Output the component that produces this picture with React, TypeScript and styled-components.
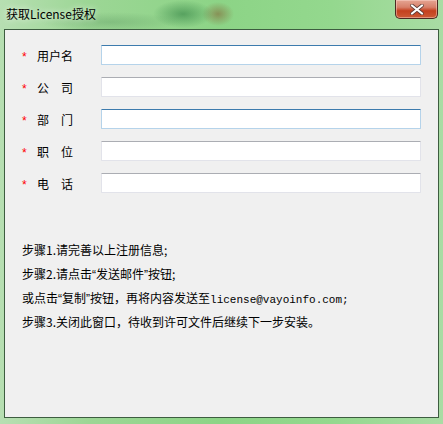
import React from 'react';
import styled, { createGlobalStyle } from 'styled-components';

const GlobalStyle = createGlobalStyle`
  html, body {
    margin: 0;
    padding: 0;
    background: #8fd48a;
  }
  body {
    font-family: "Noto Sans CJK SC", "Liberation Sans", sans-serif;
  }
`;

const Window = styled.div`
  width: 443px;
  height: 424px;
  display: flex;
  flex-direction: column;
  box-sizing: border-box;
  background:
    radial-gradient(ellipse 30px 14px at 183px 14px, rgba(40, 120, 60, 0.55), transparent),
    radial-gradient(ellipse 16px 12px at 218px 14px, rgba(130, 80, 40, 0.5), transparent),
    radial-gradient(ellipse 70px 10px at 110px 22px, rgba(60, 120, 70, 0.25), transparent),
    linear-gradient(90deg, #b7dfb2 0%, #9cd695 20%, #8cd486 50%, #94d88e 75%, #a9dca4 100%);
`;

const TitleBar = styled.div`
  height: 29px;
  flex: none;
  display: flex;
  align-items: flex-start;
  justify-content: space-between;
  padding: 0 5px 0 6px;
`;

const Title = styled.span`
  margin-top: 6px;
  font-size: 12px;
  line-height: 16px;
  color: #000;
  text-shadow: 0 0 6px rgba(255, 255, 255, 0.9);
`;

const CloseButton = styled.div`
  width: 43px;
  height: 19px;
  box-sizing: border-box;
  border: 1px solid #4b2a22;
  border-top: none;
  border-radius: 0 0 5px 5px;
  background: linear-gradient(180deg, #e5a593 0%, #d7806a 40%, #c4401e 60%, #cc5a35 100%);
  box-shadow: inset 0 0 0 1px rgba(255, 220, 210, 0.45);
  display: flex;
  align-items: center;
  justify-content: center;
`;

const Client = styled.div`
  flex: 1;
  margin: 0 4px 6px 4px;
  border: 1px solid #3d5d40;
  background: #f0f0f0;
  display: flex;
  flex-direction: column;
  padding: 15px 16px 0 16px;
`;

const Form = styled.div`
  display: flex;
  flex-direction: column;
  gap: 12px;
`;

const Row = styled.div`
  display: flex;
  align-items: center;
  height: 20px;
`;

const Star = styled.span`
  width: 15px;
  color: #ff0000;
  font-size: 12px;
  line-height: 12px;
  font-family: "Liberation Sans", sans-serif;
  padding-top: 3px;
  padding-left: 1px;
`;

const Label = styled.span`
  width: 36px;
  margin-right: 28px;
  display: flex;
  justify-content: space-between;
  font-size: 12px;
  color: #000;
`;

const Input = styled.div<{ $hot?: boolean }>`
  width: 320px;
  height: 20px;
  box-sizing: border-box;
  background: #fff;
  border: 1px solid ${(p) => (p.$hot ? '#b5d3ea' : '#e2e3ea')};
  border-top-color: ${(p) => (p.$hot ? '#3d7bad' : '#abadb3')};
  border-radius: 1px;
`;

const Steps = styled.div`
  margin-top: 45px;
  display: flex;
  flex-direction: column;
  padding-left: 1px;
`;

const Line = styled.div`
  height: 24px;
  line-height: 24px;
  font-size: 12px;
  color: #000;
  white-space: nowrap;
`;

const Quote = styled.span`
  font-family: "Liberation Sans", sans-serif;
`;

const Mail = styled.span`
  font-family: "Liberation Mono", monospace;
  font-size: 11px;
`;

const fields = [
  { chars: ['用', '户', '名'], hot: true },
  { chars: ['公', '司'], hot: false },
  { chars: ['部', '门'], hot: true },
  { chars: ['职', '位'], hot: false },
  { chars: ['电', '话'], hot: false },
];

export default function App() {
  return (
    <>
      <GlobalStyle />
      <Window>
        <TitleBar>
          <Title>获取License授权</Title>
          <CloseButton>
            <svg width="14" height="11" viewBox="0 0 14 11">
              <path
                d="M2 1.5 L12 9.5 M12 1.5 L2 9.5"
                stroke="#5a3a35"
                strokeWidth="3.6"
                strokeLinecap="round"
              />
              <path
                d="M2 1.5 L12 9.5 M12 1.5 L2 9.5"
                stroke="#ffffff"
                strokeWidth="2.2"
                strokeLinecap="round"
              />
            </svg>
          </CloseButton>
        </TitleBar>
        <Client>
          <Form>
            {fields.map((f, i) => (
              <Row key={i}>
                <Star>*</Star>
                <Label>
                  {f.chars.map((c) => (
                    <span key={c}>{c}</span>
                  ))}
                </Label>
                <Input $hot={f.hot} />
              </Row>
            ))}
          </Form>
          <Steps>
            <Line>步骤1.请完善以上注册信息;</Line>
            <Line>
              步骤2.请点击<Quote>“</Quote>发送邮件<Quote>”</Quote>按钮;
            </Line>
            <Line>
              或点击<Quote>“</Quote>复制<Quote>”</Quote>按钮，再将内容发送至
              <Mail>license@vayoinfo.com;</Mail>
            </Line>
            <Line>步骤3.关闭此窗口，待收到许可文件后继续下一步安装。</Line>
          </Steps>
        </Client>
      </Window>
    </>
  );
}
